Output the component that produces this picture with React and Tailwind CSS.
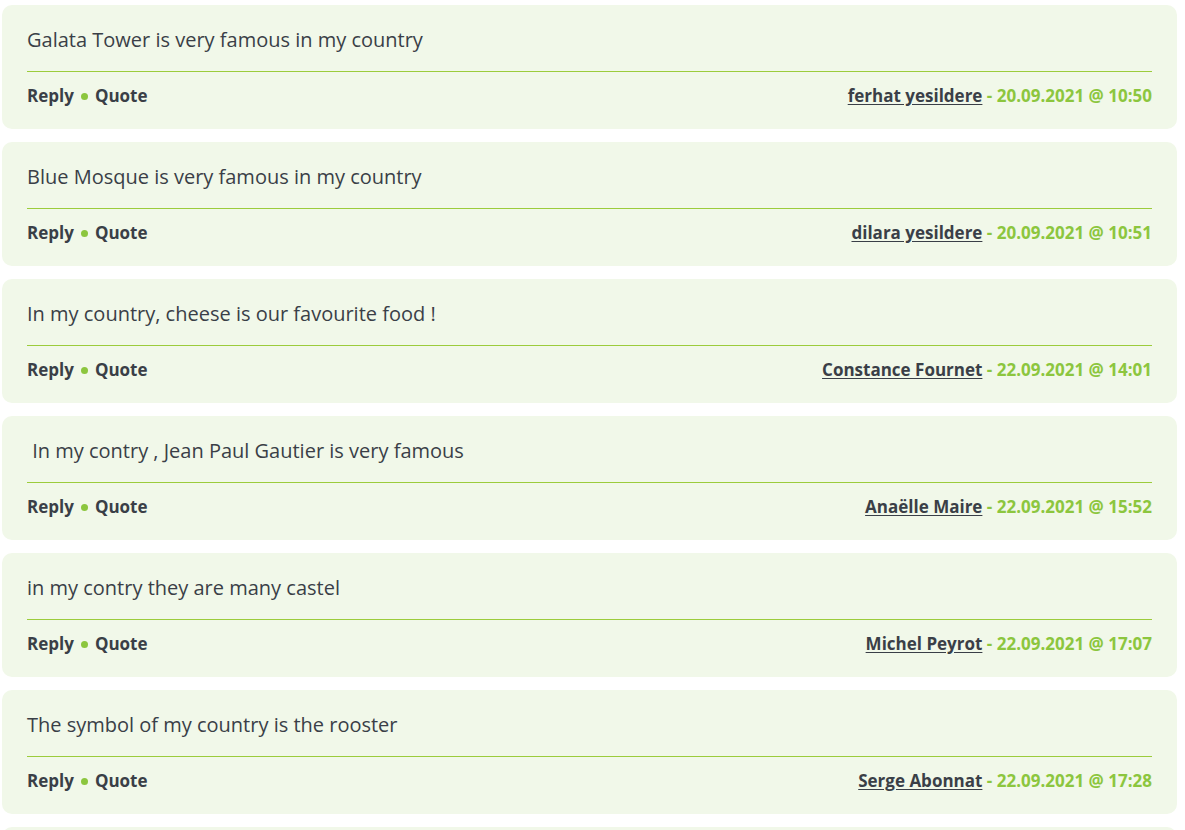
const posts = [
  { text: "Galata Tower is very famous in my country", author: "ferhat yesildere", date: "20.09.2021 @ 10:50" },
  { text: "Blue Mosque is very famous in my country", author: "dilara yesildere", date: "20.09.2021 @ 10:51" },
  { text: "In my country, cheese is our favourite food !", author: "Constance Fournet", date: "22.09.2021 @ 14:01" },
  { text: "\u00a0In my contry , Jean Paul Gautier is very famous", author: "Anaëlle Maire", date: "22.09.2021 @ 15:52" },
  { text: "in my contry they are many castel", author: "Michel Peyrot", date: "22.09.2021 @ 17:07" },
  { text: "The symbol of my country is the rooster", author: "Serge Abonnat", date: "22.09.2021 @ 17:28" },
];

function Post({ post }) {
  return (
    <div className="w-[1175px] ml-[2px] shrink-0 rounded-[10px] bg-[#f1f8e9] px-[25px] pt-[21px] pb-[21px]">
      <p className="text-[20px] leading-[28px] text-[#3a3f47] mb-[17px] whitespace-pre">{post.text}</p>
      <div className="h-px bg-[#9ccc3c]" />
      <div className="mt-[12px] flex items-center justify-between h-[24px] text-[17px] font-bold text-[#3a3f47]">
        <div className="flex items-center">
          <span>Reply</span>
          <span className="mx-[7px] w-[7px] h-[7px] rounded-full bg-[#8cc63e]" />
          <span>Quote</span>
        </div>
        <div>
          <a href="#" className="underline underline-offset-2">{post.author}</a>
          <span className="text-[#8cc63e]"> - {post.date}</span>
        </div>
      </div>
    </div>
  );
}

export default function App() {
  return (
    <div className="bg-white pt-[5px] flex flex-col gap-[13px] font-['Open_Sans',sans-serif] h-[830px] overflow-hidden">
      {posts.map((p, i) => (
        <Post key={i} post={p} />
      ))}
      <div className="w-[1175px] ml-[2px] h-[124px] shrink-0 rounded-[10px] bg-[#f1f8e9]" />
    </div>
  );
}
